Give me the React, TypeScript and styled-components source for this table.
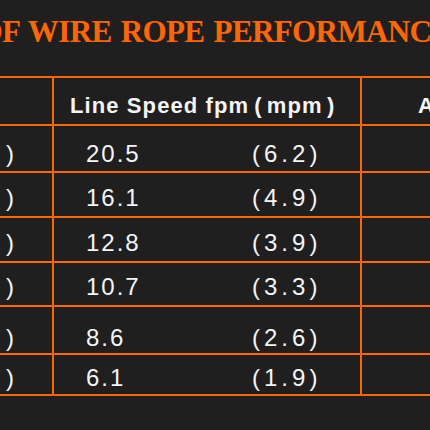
import React from 'react';
import styled, { createGlobalStyle } from 'styled-components';

const ORANGE = '#ff6600';
const BG = '#1f1f1f';
const INK = '#f4f4f4';

const GlobalStyle = createGlobalStyle`
  html, body {
    margin: 0;
    padding: 0;
    background: ${BG};
  }
`;

const Page = styled.div`
  width: 430px;
  height: 430px;
  overflow: hidden;
  background: ${BG};
  display: flex;
  flex-direction: column;
`;

const TitleBar = styled.div`
  height: 76px;
  box-sizing: border-box;
  padding-top: 16px;
  display: flex;
  justify-content: center;
  overflow: hidden;
`;

const Title = styled.h1`
  margin: 0;
  flex-shrink: 0;
  white-space: nowrap;
  font-family: 'Liberation Serif', serif;
  font-weight: 700;
  font-size: 31px;
  line-height: 32px;
  letter-spacing: -0.6px;
  word-spacing: 2px;
  color: ${ORANGE};
`;

const Table = styled.div`
  flex-shrink: 0;
  align-self: flex-start;
  display: grid;
  grid-template-columns: 52px 306px 200px;
  grid-template-rows: 46px 45px 43px 43px 42px 46px 39px;
  gap: 2px;
  padding: 2px 0;
  background: ${ORANGE};
`;

const Cell = styled.div<{ $shift?: number }>`
  background: ${BG};
  display: flex;
  align-items: center;
  overflow: hidden;
  white-space: nowrap;
  box-sizing: border-box;
  padding-top: ${({ $shift = 0 }) => $shift * 2}px;
  color: ${INK};
  font-family: 'Liberation Sans', Arial, sans-serif;
  font-size: 24px;
  letter-spacing: 2px;
`;

const LeadCell = styled(Cell)`
  justify-content: flex-end;
  padding-right: 34px;
  letter-spacing: 4px;
`;

const SpeedCell = styled(Cell)`
  padding-left: 32px;
`;

const HeadCell = styled(Cell)<{ $indent?: number }>`
  padding-left: ${({ $indent = 0 }) => $indent}px;
  font-weight: 700;
  font-size: 22px;
  letter-spacing: 1.1px;
`;

const Fpm = styled.span`
  flex-shrink: 0;
  width: 166px;
`;

const Mpm = styled.span`
  letter-spacing: 4px;
`;

const Unit = styled.span`
  margin-left: 5px;
  word-spacing: -3px;
`;

const rows = [
  { lead: '( 6.2 )', fpm: '20.5', mpm: '6.2', shift: 5 },
  { lead: '( 4.9 )', fpm: '16.1', mpm: '4.9', shift: 3 },
  { lead: '( 3.9 )', fpm: '12.8', mpm: '3.9', shift: 3 },
  { lead: '( 3.3 )', fpm: '10.7', mpm: '3.3', shift: 3 },
  { lead: '( 2.6 )', fpm: '8.6', mpm: '2.6', shift: 8 },
  { lead: '( 1.9 )', fpm: '6.1', mpm: '1.9', shift: 3 },
];

export default function App() {
  return (
    <Page>
      <GlobalStyle />
      <TitleBar>
        <Title>OF WIRE ROPE PERFORMANCE</Title>
      </TitleBar>
      <Table>
        <HeadCell $shift={4.5} />
        <HeadCell $shift={4.5} $indent={16}>
          Line Speed fpm<Unit>( mpm )</Unit>
        </HeadCell>
        <HeadCell $shift={4.5} $indent={56}>
          Available Rope
        </HeadCell>
        {rows.map(row => (
          <React.Fragment key={row.fpm}>
            <LeadCell $shift={row.shift}>{row.lead}</LeadCell>
            <SpeedCell $shift={row.shift}>
              <Fpm>{row.fpm}</Fpm>
              <Mpm>({row.mpm})</Mpm>
            </SpeedCell>
            <Cell $shift={row.shift} />
          </React.Fragment>
        ))}
      </Table>
    </Page>
  );
}
